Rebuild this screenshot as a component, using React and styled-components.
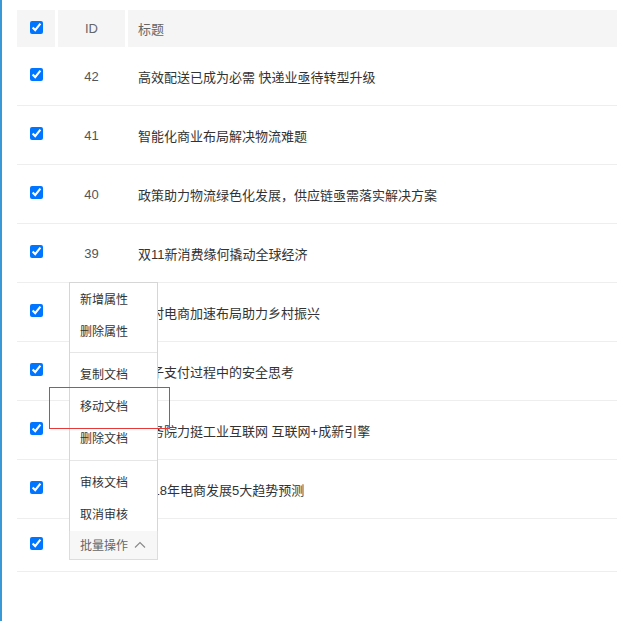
import React from "react";
import styled, { createGlobalStyle } from "styled-components";

const GlobalStyle = createGlobalStyle`
  html, body { margin: 0; padding: 0; background: #fff; }
  body {
    font-family: "Liberation Sans", "Noto Sans CJK SC", sans-serif;
    font-size: 13px;
    color: #333;
  }
  * { box-sizing: border-box; }
`;

const Page = styled.div`
  min-height: 100vh;
  border-left: 2px solid #3a98d6;
  padding: 10px 0 0 15px;
`;

const Grid = styled.div`
  display: grid;
  grid-template-columns: 38px 67px 1fr;
  column-gap: 3px;
`;

const HeadRow = styled(Grid)`
  height: 37px;
`;

const HeadCell = styled.div`
  background: #f5f5f5;
  display: flex;
  align-items: center;
  justify-content: ${(p) => (p.$center ? "center" : "flex-start")};
  padding-left: ${(p) => (p.$center ? "0" : "10px")};
  color: #666;
  font-size: 13px;
`;

const Row = styled(Grid)`
  height: ${(p) => (p.$footer ? "53px" : "59px")};
  border-bottom: 1px solid #eeeeee;
  align-items: center;
`;

const Cell = styled.div`
  display: flex;
  align-items: center;
  justify-content: ${(p) => (p.$center ? "center" : "flex-start")};
  padding-left: ${(p) => (p.$center ? "0" : "10px")};
  color: ${(p) => (p.$muted ? "#555" : "#333")};
  font-size: 13px;
  white-space: nowrap;
`;

const CheckCell = styled.div`
  display: flex;
  justify-content: center;
  align-items: center;
  padding-left: 1px;
  padding-top: ${(p) => (p.$nudge ? "0" : "0")};
  margin-top: ${(p) => (p.$up ? "-3px" : "0")};
`;

const FooterCell = styled.div`
  grid-column: 2 / 4;
  padding-left: 11px;
  display: flex;
  align-items: center;
`;

const Check = styled.input.attrs({ type: "checkbox" })`
  width: 13px;
  height: 13px;
  margin: 0;
`;

const Dropdown = styled.div`
  position: relative;
  display: inline-block;
  margin-top: -1px;
`;

const BatchButton = styled.div`
  width: 89px;
  height: 30px;
  border: 1px solid #dddddd;
  background: #f7f7f7;
  color: #666;
  font-size: 12px;
  display: flex;
  align-items: center;
  padding-left: 10px;
  gap: 4px;
`;

const Menu = styled.div`
  position: absolute;
  left: 0;
  bottom: calc(100% - 1px);
  width: 89px;
  background: #fff;
  border: 1px solid #d6d6d6;
  border-bottom: none;
  padding-top: 1px;
  z-index: 5;
`;

const MenuItem = styled.div`
  position: relative;
  height: 32px;
  line-height: 32px;
  padding-left: 10px;
  font-size: 12px;
  color: #333;
  white-space: nowrap;
`;

const Highlight = styled.div`
  position: absolute;
  top: -4px;
  left: -21px;
  width: 121px;
  height: 42px;
  border: 1px solid #e63a3a;
  pointer-events: none;
`;

const Divider = styled.div`
  height: 1px;
  background: #e6e6e6;
  margin: ${(p) => p.$margin || "5px 0"};
`;

const Chevron = () => (
  <svg width="12" height="8" viewBox="0 0 12 8" fill="none" style={{ marginLeft: 2 }}>
    <polyline points="1,6.5 6,1.5 11,6.5" stroke="#888" strokeWidth="1.1" fill="none" />
  </svg>
);

const rows = [
  { id: 42, title: "高效配送已成为必需 快递业亟待转型升级" },
  { id: 41, title: "智能化商业布局解决物流难题" },
  { id: 40, title: "政策助力物流绿色化发展，供应链亟需落实解决方案" },
  { id: 39, title: "双11新消费缘何撬动全球经济" },
  { id: 38, title: "农村电商加速布局助力乡村振兴" },
  { id: 37, title: "电子支付过程中的安全思考" },
  { id: 36, title: "国务院力挺工业互联网 互联网+成新引擎" },
  { id: 35, title: "2018年电商发展5大趋势预测" },
];

const groups = [
  ["新增属性", "删除属性"],
  ["复制文档", "移动文档", "删除文档"],
  ["审核文档", "取消审核"],
];

export default function App() {
  return (
    <>
      <GlobalStyle />
      <Page>
        <HeadRow>
          <HeadCell $center>
            <Check defaultChecked style={{ marginTop: -3 }} />
          </HeadCell>
          <HeadCell $center>ID</HeadCell>
          <HeadCell>标题</HeadCell>
        </HeadRow>
        {rows.map((r) => (
          <Row key={r.id}>
            <CheckCell $up>
              <Check defaultChecked />
            </CheckCell>
            <Cell $center $muted>
              {r.id}
            </Cell>
            <Cell>{r.title}</Cell>
          </Row>
        ))}
        <Row $footer>
          <CheckCell $up>
            <Check defaultChecked />
          </CheckCell>
          <FooterCell>
            <Dropdown>
              <Menu>
                {groups.map((g, gi) => (
                  <React.Fragment key={gi}>
                    {gi > 0 && <Divider $margin={gi === 1 ? "4px 0 6px" : "5px 0 6px"} />}
                    {g.map((label) => (
                      <MenuItem key={label}>
                        {label}
                        {label === "移动文档" && <Highlight />}
                      </MenuItem>
                    ))}
                  </React.Fragment>
                ))}
              </Menu>
              <BatchButton>
                批量操作
                <Chevron />
              </BatchButton>
            </Dropdown>
          </FooterCell>
        </Row>
      </Page>
    </>
  );
}
